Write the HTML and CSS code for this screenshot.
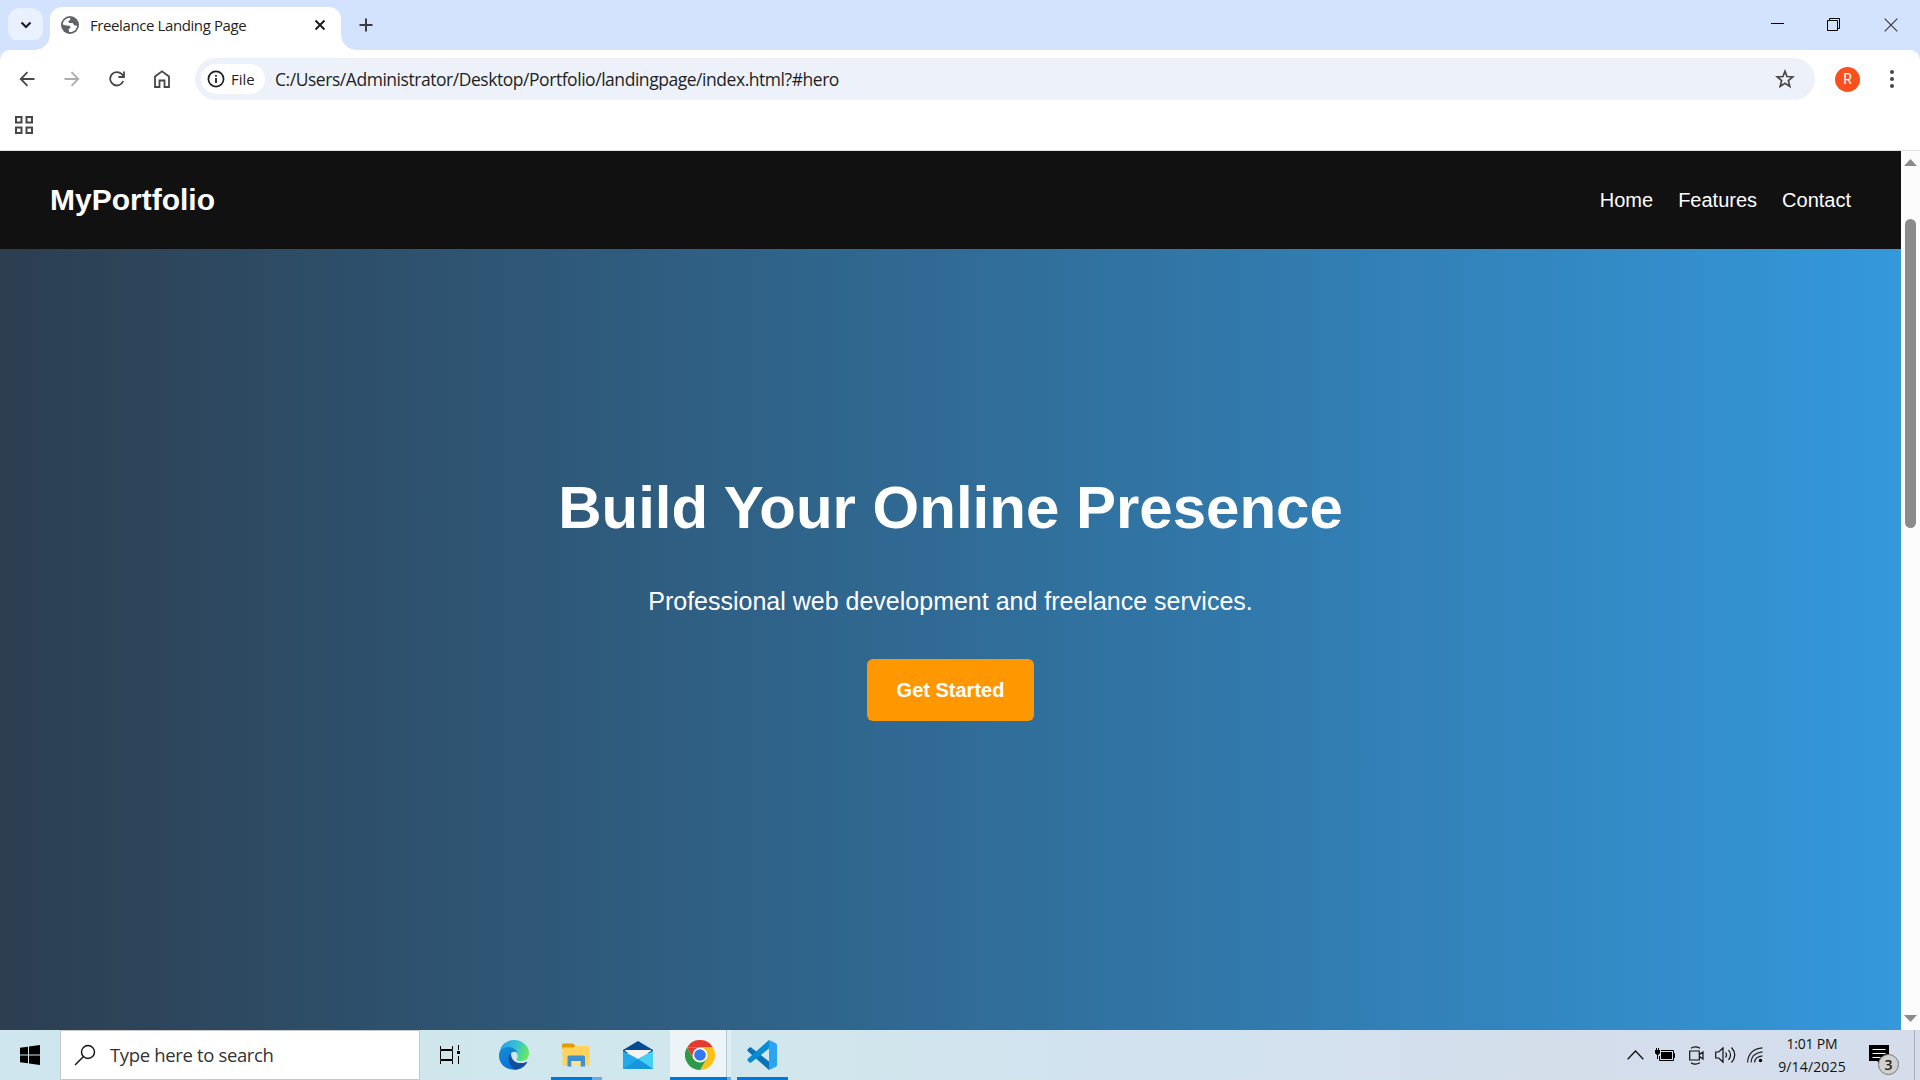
FILE: index.html
```html
<!DOCTYPE html>
<html lang="en">
<head>
<meta charset="utf-8">
<title>Freelance Landing Page</title>
<link rel="stylesheet" href="styles.css">
</head>
<body>
<div class="desktop">
  <div class="tabstrip">
    <div class="tab-search"><svg width="12" height="8" viewBox="0 0 12 8"><path d="M1.5 1.5 6 6l4.500-4.500" fill="none" stroke="#1f1f1f" stroke-width="2.200"/></svg></div>
    <div class="tab">
      <svg class="globe" width="18" height="18" viewBox="0 0 18 18"><circle cx="9" cy="9" r="9" fill="#5f6368"/><path d="M9.500 1.800C5 1.800 2 5 1.800 8.500L5 9.600l3.500.2 1.300 1.800-2.200 1.500.5 2.900C12.500 16.500 15.800 13.500 16.200 9.500l-2.700-.3-1.700-2.200H8.500L7.300 5.500l2-1.400z" fill="#fff"/><path d="M9.500 1.800 9.300 4.100l-2 1.400L8.500 7h3.300l1.700 2.200 2.700.3C16.500 5 13.500 2 9.500 1.800z" fill="#5f6368"/></svg>
      <span class="tab-title">Freelance Landing Page</span>
      <svg class="tab-close" width="12" height="12" viewBox="0 0 12 12"><path d="M1.500 1.500l9 9m0-9l-9 9" stroke="#1f1f1f" stroke-width="2"/></svg>
    </div>
    <svg class="new-tab" width="14" height="14" viewBox="0 0 14 14"><path d="M7 .5v13M.5 7h13" stroke="#3c3c3c" stroke-width="2"/></svg>
    <div class="window-buttons">
      <svg width="13" height="13" viewBox="0 0 13 13"><path d="M0 5.500h13" stroke="#000"/></svg>
      <svg width="13" height="13" viewBox="0 0 13 13"><path d="M.5 2.500h10v10H.5zM2.500 2.500v-2h10v10h-2" fill="none" stroke="#000"/></svg>
      <svg width="14" height="14" viewBox="0 0 14 14"><path d="M.7.7l12.600 12.600M13.300.7.7 13.300" stroke="#333" stroke-width="1.100"/></svg>
    </div>
  </div>
  <div class="toolbar">
    <div class="nav-buttons">
      <svg width="16" height="16" viewBox="0 0 16 16"><path d="M15.500 8H2M8.500 1.200 1.700 8l6.800 6.800" fill="none" stroke="#474747" stroke-width="1.800"/></svg>
      <svg width="16" height="16" viewBox="0 0 16 16"><path d="M.5 8H14M7.500 1.200 14.300 8l-6.800 6.800" fill="none" stroke="#adadad" stroke-width="1.800"/></svg>
      <svg width="16" height="16" viewBox="0 0 16 16"><path d="M14.200 10A6.700 6.700 0 1 1 12.800 3.200L14.500 5M15 .4v5.600H9.400" fill="none" stroke="#474747" stroke-width="1.800"/></svg>
      <svg width="16" height="18" viewBox="0 0 16 18"><path d="M1 17V6.500L8 1.300l7 5.200V17h-4.500v-6.500h-5V17z" fill="none" stroke="#474747" stroke-width="1.800"/></svg>
    </div>
    <div class="address">
      <div class="chip"><svg width="18" height="18" viewBox="0 0 18 18"><circle cx="9" cy="9" r="7.600" fill="none" stroke="#1f1f1f" stroke-width="1.700"/><path d="M9 8v5M9 5v1.800" stroke="#1f1f1f" stroke-width="1.800"/></svg><span>File</span></div>
      <span class="url">C:/Users/Administrator/Desktop/Portfolio/landingpage/index.html?#hero</span>
      <svg class="star" width="20" height="20" viewBox="0 0 20 20"><path d="M10 2.300l2 5.200 5.800.4-4.400 3.700 1.400 5.800-4.800-3.200-4.800 3.200 1.400-5.800-4.400-3.700L8 7.500z" fill="none" stroke="#474747" stroke-width="1.700"/></svg>
    </div>
    <div class="avatar">R</div>
    <svg class="kebab" width="6" height="18" viewBox="0 0 6 18"><g fill="#474747"><circle cx="3" cy="2" r="2"/><circle cx="3" cy="9" r="2"/><circle cx="3" cy="16" r="2"/></g></svg>
  </div>
  <div class="bookmarks"><svg width="18" height="18" viewBox="0 0 18 18"><path d="M1 1h5.500v5.500H1zM11.500 1H17v5.500h-5.500zM1 11.500h5.500V17H1zM11.500 11.500H17V17h-5.500z" fill="none" stroke="#474747" stroke-width="2"/></svg></div>
  <div class="viewport">
    <div class="page">
      <header class="site-header">
        <div class="logo">MyPortfolio</div>
        <nav class="site-nav"><a>Home</a><a>Features</a><a>Contact</a></nav>
      </header>
      <main class="hero">
        <h1>Build Your Online Presence</h1>
        <p>Professional web development and freelance services.</p>
        <a class="cta">Get Started</a>
      </main>
    </div>
    <div class="scrollbar">
      <svg width="13" height="7" viewBox="0 0 13 7"><path d="M0 7 6.500 0 13 7z" fill="#8b8b8b"/></svg>
      <div class="thumb"></div>
      <svg class="scroll-down" width="13" height="7" viewBox="0 0 13 7"><path d="M0 0l6.500 7L13 0z" fill="#8b8b8b"/></svg>
    </div>
  </div>
  <div class="taskbar">
    <div class="start"><svg width="20" height="20" viewBox="0 0 20 20"><path d="M0 2.800 8 1.700v7.800H0zM9 1.500 20 0v9.500H9zM0 10.500h8v7.700l-8-1zM9 10.500h11V20L9 18.400z"/></svg></div>
    <div class="search"><svg width="22" height="22" viewBox="0 0 22 22"><circle cx="14" cy="8" r="6.500" fill="none" stroke="#111" stroke-width="1.400"/><path d="M9.300 12.700 1 21" stroke="#111" stroke-width="1.400"/></svg><span>Type here to search</span></div>
    <div class="task-view"><svg width="20" height="20" viewBox="0 0 20 20"><path d="M.5 1v3.500h12V1M.5 19v-3.500h12V19M.5 5.500h12v9H.5zM18.500 0v5M18.500 11v8" fill="none" stroke="#000"/><path d="M17 6h3v3h-3z"/></svg></div>
    <div class="apps">
      <div class="app edge"><svg width="30" height="30" viewBox="0 0 30 30"><defs><linearGradient id="edgeTop" x1="0" y1=".3" x2="1" y2=".6"><stop offset="0" stop-color="#249fe5"/><stop offset=".5" stop-color="#35c1d8"/><stop offset="1" stop-color="#66eb55"/></linearGradient><linearGradient id="edgeSide" x1="0" y1="0" x2=".6" y2="1"><stop offset="0" stop-color="#168fd5"/><stop offset="1" stop-color="#0870d5"/></linearGradient></defs><path d="M.5 13C1.500 5 7.500 0 15 0c8.500 0 15 6 15 13 0 5-3.700 8-8 8-3.500 0-5-1.200-4-2.700 1.500-2 .5-5.300-2-7C11 8 5 8 .5 13z" fill="url(#edgeTop)"/><path d="M0 15C.5 9 5.500 7 9.500 7c4 0 8 2.500 8.700 5.500-3-1.800-7.200-.5-7.200 4.500 0 6 3 10 8 12C9 32-.5 24.500 0 15z" fill="url(#edgeSide)"/><path d="M12 13.500c-5 5-2 12 4.500 16.300C21.500 29.500 26 26.500 28 22.500c.2-.6-.3-.9-.8-.6C20 25 12 22 12 13.500z" fill="#104f9e"/></svg></div>
      <div class="app folder"><svg width="28" height="24" viewBox="0 0 28 24"><path d="M0 2q0-1.500 1.500-1.500H11L13.500 3v3H0z" fill="#e29b00"/><path d="M.5 4.500h11L13.500 3H26q1.500 0 1.500 1.500V23H.5z" fill="#ffd35c"/><path d="M5.500 23.500V14q0-1.500 1.500-1.500h14.500q1.500 0 1.500 1.500v9.500h-4.500V18h-9v5.500z" fill="#3c91d0"/><path d="M9.500 18h9v5h-9z" fill="#ffe18b"/></svg></div>
      <div class="app mail"><svg width="30" height="28" viewBox="0 0 30 28"><path d="M0 9 15 0l15 9v3H0z" fill="#064a91"/><path d="M2 9h26v1L15 18 2 10z" fill="#f5f3f1"/><path d="M0 10 15 18l15-8V28H0z" fill="#23a9e9"/><path d="M30 10 15 18l15 10z" fill="#46d0f5"/><path d="M0 28 15 18l15 10z" fill="#1796de"/></svg></div>
      <div class="app chrome"><svg width="30" height="30" viewBox="0 0 30 30"><path d="M2 7.500A15 15 0 0 1 28 7.500H15z" fill="#e33b2e"/><path d="M28 7.500A15 15 0 0 1 15 30l6.500-11.200L18 7.500z" fill="#fbc116"/><path d="M2 7.500A15 15 0 0 0 15 30l6.500-11.200H8.500z" fill="#2b9b47"/><path d="M2 7.500 8.500 18.800 15 7.500z" fill="#e33b2e"/><circle cx="15" cy="15" r="7.500" fill="#fff"/><circle cx="15" cy="15" r="5.800" fill="#3478ed"/></svg></div>
      <div class="app code"><svg width="30" height="30" viewBox="0 0 30 30"><path d="M.5 9.500 2.500 7.500q.8-.6 1.600 0L22 21.500V30L.5 11z" fill="#0873b9"/><path d="M.5 20.500 2.500 22.500q.8.600 1.600 0L22 8.500V0L.5 19z" fill="#078bd3"/><path d="M22 0l6.500 3q1.500.8 1.500 2v20q0 1.200-1.500 2L22 30z" fill="#2ba5f3"/></svg></div>
    </div>
    <div class="tray">
      <svg width="17" height="10" viewBox="0 0 17 10"><path d="M.7 9.300 8.500 1l7.800 8.300" fill="none" stroke="#111" stroke-width="1.300"/></svg>
      <svg width="20" height="14" viewBox="0 0 20 14"><path d="M6 2.500h12.500v10H4.500V8M18.500 5.500h1v4h-1" fill="none" stroke="#000"/><path d="M6 4h11v7H6zM0 2h5v3q-1 2-2.500 2T0 5zM1 0h1v2H1zM3 0h1v2H3zM2 7h1v4H2z"/></svg>
      <svg class="meet" width="15" height="19" viewBox="0 0 15 19"><path d="M.7 5h9.600v9H.7zM10.500 8.500l3.500-2.500v7l-3.500-2.500M2 2.200q4-2.800 9 0M2 16.800q4 2.800 9 0" fill="none" stroke="#111" stroke-width="1.200"/></svg>
      <svg width="21" height="18" viewBox="0 0 21 18"><path d="M.7 6h3L8 2v14l-4.300-4h-3zM10.500 6.500q2 2.500 0 5M13.500 4q4 5 0 10M16.500 1.500q6.500 7.500 0 15" fill="none" stroke="#111" stroke-width="1.200"/></svg>
      <svg width="16" height="16" viewBox="0 0 16 16"><path d="M.5 15.500Q1.500 2 15.500.8M4 15.500Q4.500 6 15.500 4.800M7.500 15.500Q8 9.500 15.500 8.800" fill="none" stroke="#222" stroke-width="1.200"/><circle cx="13.500" cy="13.500" r="1.700"/></svg>
    </div>
    <div class="clock"><span>1:01 PM</span><span class="date">9/14/2025</span></div>
    <div class="notifications">
      <svg width="20" height="20" viewBox="0 0 20 20"><path d="M0 0h20v16h-8v4l-4-4H0z"/><path d="M3.500 4.500h13M3.500 8.500h13M3.500 12.500h8" stroke="#fff" stroke-width="1.200"/></svg>
      <span class="badge">3</span>
    </div>
    <div class="show-desktop"></div>
  </div>
</div>
</body>
</html>
```
FILE: styles.css
```css
* { box-sizing: border-box; }
body { margin: 0; overflow: hidden; font-family: "Open Sans", "Noto Sans", sans-serif; color: #1f1f1f; }
svg { display: block; flex: none; }
.desktop { width: 1920px; height: 1080px; display: flex; flex-direction: column; background: #fff; }

.tabstrip { height: 50px; background: #d3e3fd; display: flex; align-items: flex-start; flex: none; padding-left: 8px; }
.tab-search { width: 35px; height: 34px; margin-top: 8px; border-radius: 12px; background: #e9f0fe; display: flex; align-items: center; justify-content: center; }
.tab { position: relative; width: 291px; height: 43px; margin: 7px 0 0 7px; padding: 0 15px 8px 11px; border-radius: 12px 12px 0 0; background: #fff; display: flex; align-items: center; }
.tab::before, .tab::after { content: ""; position: absolute; bottom: 0; width: 15px; height: 15px; }
.tab::before { left: -15px; background: radial-gradient(circle at 0 0, transparent 14.500px, #fff 15px); }
.tab::after { right: -15px; background: radial-gradient(circle at 100% 0, transparent 14.500px, #fff 15px); }
.tab-title { margin-left: 11px; font: 15px/20px "Open Sans", sans-serif; white-space: nowrap; width: 156px; letter-spacing: -0.400px; }
.tab-close { margin-left: auto; }
.new-tab { margin: 18px 0 0 18px; }
.window-buttons { margin: 18px 22px 0 auto; display: flex; gap: 43px; }
.window-buttons svg:last-child { margin-left: 1px; }

.toolbar { height: 58px; display: flex; align-items: center; flex: none; background: #fff; padding: 0 25px 0 20px; box-shadow: 0 -10px 0 #d3e3fd; border-radius: 10px 10px 0 0; }
.nav-buttons { width: 151px; display: flex; align-items: center; gap: 29px; margin: 0 1px 0 -1px; }
.address { margin-left: 24px; width: 1620px; height: 42px; border-radius: 21px; background: #ecf1fa; display: flex; align-items: center; padding: 0 20px 0 6px; }
.chip { width: 64px; height: 30px; border-radius: 15px; background: #fff; display: flex; align-items: center; gap: 6px; padding-left: 6px; font: 500 15px/20px "Open Sans", sans-serif; }
.url { margin-left: 10px; font-size: 17.500px; line-height: 24px; white-space: nowrap; letter-spacing: -0.455px; }
.star { margin-left: auto; }
.avatar { margin-left: 20px; width: 25px; height: 25px; border-radius: 50%; background: #f8511d; color: #fff; font: 14px/25px Roboto, sans-serif; text-align: center; }
.kebab { margin-left: auto; }
.bookmarks { height: 43px; flex: none; padding: 8px 15px; border-bottom: 1px solid #dedede; }

.viewport { height: 879px; display: flex; flex: none; }
.page { width: 1901px; display: flex; flex-direction: column; font-family: "Liberation Sans", Arial, sans-serif; color: #fff; }
.site-header { height: 98px; background: #111; display: flex; justify-content: space-between; align-items: center; padding: 0 50px; }
.logo { font-size: 30px; font-weight: bold; }
.site-nav { display: flex; gap: 25px; font-size: 20px; }
.hero { flex: 1; display: flex; flex-direction: column; align-items: center; padding-top: 224px; background: linear-gradient(to right, #2c3e50, #3498db); }
.hero h1 { margin: 0 0 45px; font-size: 60px; line-height: 69px; }
.hero p { margin: 0 0 43px; font-size: 25px; line-height: 29px; }
.cta { background: #ff9800; border-radius: 6px; width: 167px; height: 62px; font-size: 20px; line-height: 62px; font-weight: bold; text-align: center; }
.scrollbar { width: 19px; background: #fcfcfc; display: flex; flex-direction: column; align-items: center; padding: 8px 0; }
.thumb { width: 11px; height: 309px; margin-top: 53px; border-radius: 6px; background: #8b8b8b; }
.scroll-down { margin-top: auto; }

.taskbar { height: 50px; flex: none; display: flex; background: linear-gradient(to right, #d0e6ee, #d1e6ed 43%, #d2e2ef 60%, #d4deeb 80%, #d5ddeb); }
.start { width: 60px; display: flex; align-items: center; justify-content: center; }
.search { width: 360px; border: 1px solid #c8c8c8; background: #fff; display: flex; align-items: center; gap: 14px; padding-left: 13px; font-size: 18.500px; color: #333; letter-spacing: -0.350px; }
.search span { padding-bottom: 1px; }
.task-view { width: 60px; padding-left: 20px; display: flex; align-items: center; }
.apps { display: flex; gap: 11px; margin-left: 9px; }
.app { width: 51px; display: flex; align-items: center; justify-content: center; }
.edge, .mail, .code { justify-content: flex-start; padding-left: 10px; }
.folder { background: linear-gradient(to right, #0078d7 41px, #65ade5 41px) bottom / 100% 3px no-repeat; padding-right: 2px; }
.chrome { width: 61px; margin: 0 -5px; justify-content: flex-start; padding-left: 15px; background: linear-gradient(to right, #0078d7 57px, #65ade5 57px) bottom / 100% 3px no-repeat, linear-gradient(to right, #ecf4f8 56px, #b4cbd8 56px 57px, #e0eef4 57px); }
.code { background: linear-gradient(#0078d7, #0078d7) bottom / 100% 3px no-repeat; }
.tray { margin-left: auto; display: flex; align-items: center; gap: 11px; }
.meet { margin-left: 3px; }
.clock { width: 72px; margin-left: 13px; display: flex; flex-direction: column; align-items: center; font-size: 14px; line-height: 23px; padding-top: 2px; letter-spacing: -0.200px; color: #111; }
.date { letter-spacing: 0.150px; }
.notifications { position: relative; width: 66px; padding: 15px 0 0 21px; }
.badge { position: absolute; left: 30px; top: 24px; width: 21px; height: 21px; border: 1px solid #777; border-radius: 50%; background: #d0d0d0; font: 600 14px/19px "Open Sans", sans-serif; text-align: center; }
.show-desktop { width: 6px; border-left: 1px solid #a4adb9; }
```
